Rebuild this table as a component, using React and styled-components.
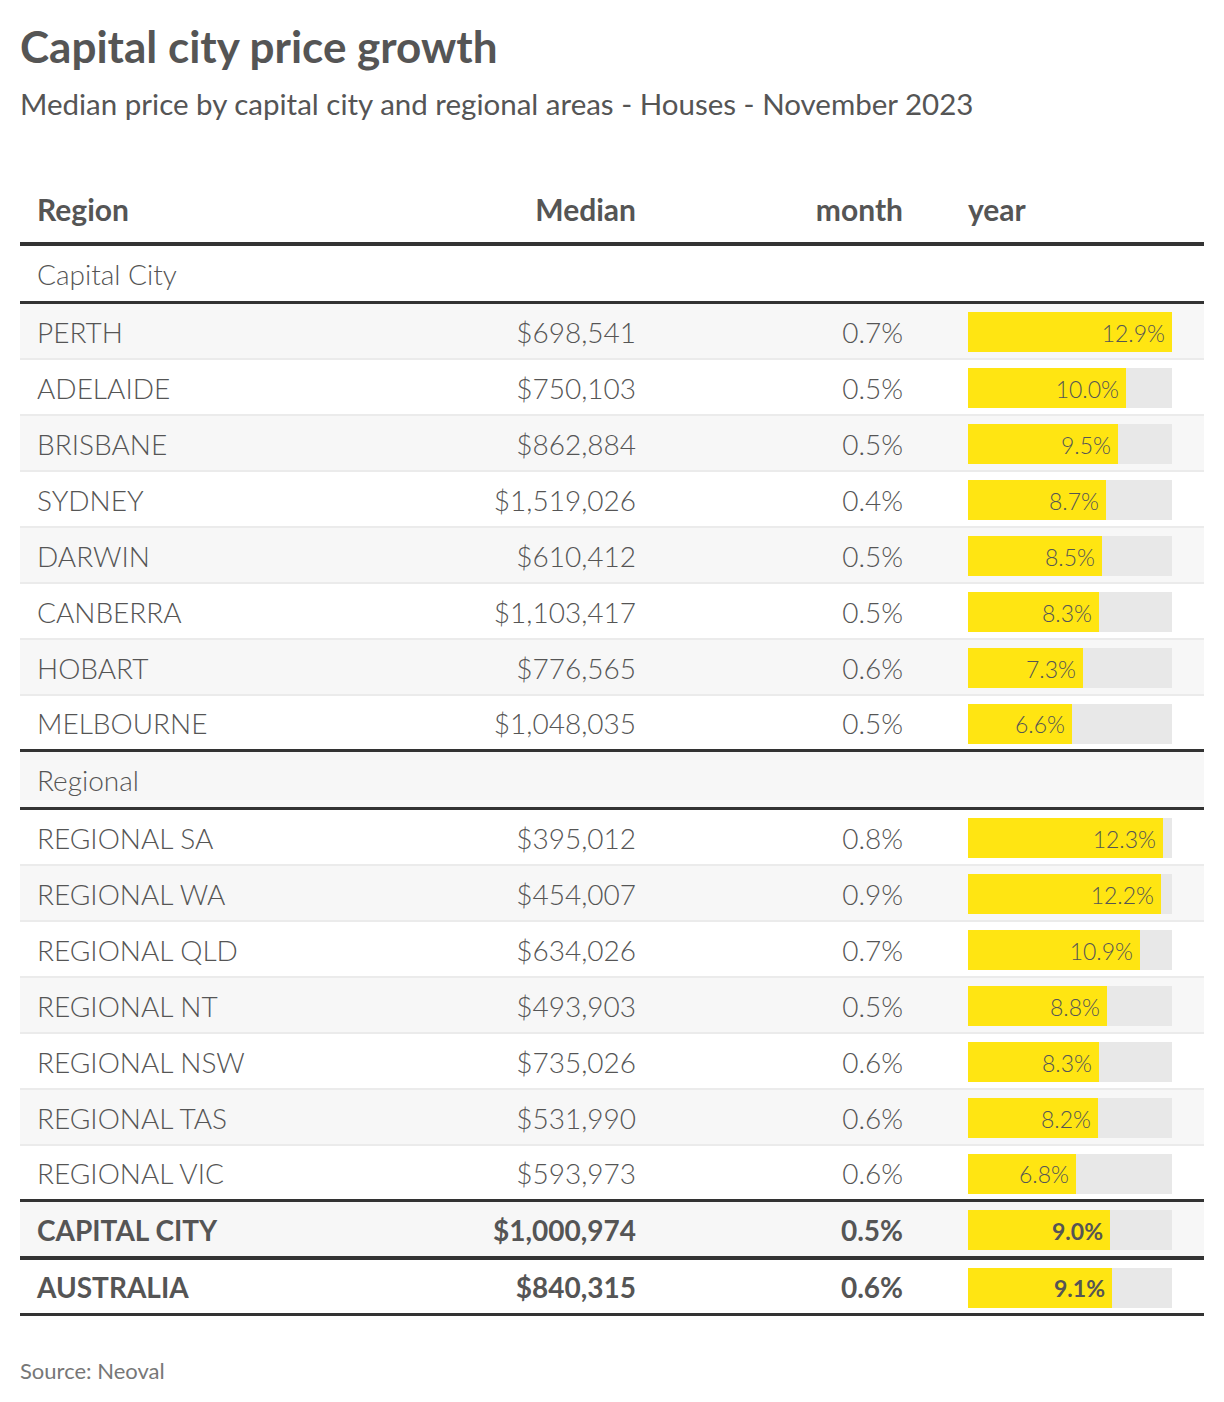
import React from 'react';
import styled, { createGlobalStyle } from 'styled-components';

const GlobalStyle = createGlobalStyle`
  body {
    margin: 0;
    background: #ffffff;
    font-family: Lato, "Open Sans", sans-serif;
    color: #555555;
  }
`;

const MAX_YEAR = 12.9;
const BAR_WIDTH = 204;

const capital = [
  ['PERTH', '$698,541', '0.7%', 12.9],
  ['ADELAIDE', '$750,103', '0.5%', 10.0],
  ['BRISBANE', '$862,884', '0.5%', 9.5],
  ['SYDNEY', '$1,519,026', '0.4%', 8.7],
  ['DARWIN', '$610,412', '0.5%', 8.5],
  ['CANBERRA', '$1,103,417', '0.5%', 8.3],
  ['HOBART', '$776,565', '0.6%', 7.3],
  ['MELBOURNE', '$1,048,035', '0.5%', 6.6],
];

const regional = [
  ['REGIONAL SA', '$395,012', '0.8%', 12.3],
  ['REGIONAL WA', '$454,007', '0.9%', 12.2],
  ['REGIONAL QLD', '$634,026', '0.7%', 10.9],
  ['REGIONAL NT', '$493,903', '0.5%', 8.8],
  ['REGIONAL NSW', '$735,026', '0.6%', 8.3],
  ['REGIONAL TAS', '$531,990', '0.6%', 8.2],
  ['REGIONAL VIC', '$593,973', '0.6%', 6.8],
];

const Page = styled.div`
  padding: 20px 20px 0 20px;
  width: 1184px;
`;

const Title = styled.h1`
  margin: 0;
  font-size: 44px;
  line-height: 52px;
  font-weight: 700;
  color: #555555;
`;

const Subtitle = styled.p`
  margin: 14px 0 0 0;
  font-size: 29.5px;
  line-height: 36px;
  font-weight: 400;
  color: #555555;
`;

const Table = styled.div`
  margin-top: 60px;
  display: flex;
  flex-direction: column;
`;

const Row = styled.div`
  display: grid;
  grid-template-columns: 436px 180px 267px 301px;
  align-items: center;
  box-sizing: border-box;
  height: ${p => p.$height || 56}px;
  padding-top: 2px;
  background: ${p => (p.$shade ? '#f7f7f7' : '#ffffff')};
  border-bottom: ${p => p.$line || '2px solid #ebebeb'};
  font-size: 28px;
  line-height: 33px;
  font-weight: ${p => (p.$bold ? 700 : 300)};
  color: #555555;
`;

const HeadRow = styled(Row)`
  padding-top: 0;
  padding-bottom: 6px;
  font-size: 30px;
  font-weight: 700;
  border-bottom: 4px solid #333333;
`;

const Cell = styled.div`
  text-align: ${p => p.$align || 'left'};
  padding-left: ${p => (p.$first ? '17px' : '0')};
  white-space: nowrap;
`;

const YearCell = styled.div`
  padding-left: 65px;
`;

const Track = styled.div`
  width: ${BAR_WIDTH}px;
  height: 40px;
  background: #e8e8e8;
  display: flex;
`;

const Fill = styled.div`
  height: 100%;
  background: #ffe512;
  box-sizing: border-box;
  padding-right: 7px;
  padding-top: 2px;
  display: flex;
  align-items: center;
  justify-content: flex-end;
  font-size: 23px;
  font-weight: ${p => (p.$bold ? 700 : 300)};
  color: #555555;
`;

const Source = styled.div`
  margin-top: 42px;
  font-size: 22px;
  line-height: 26px;
  color: #777777;
`;

function Bar({ value, bold }) {
  const w = Math.round((value / MAX_YEAR) * BAR_WIDTH);
  return (
    <Track>
      <Fill $bold={bold} style={{ width: w }}>
        {value.toFixed(1)}%
      </Fill>
    </Track>
  );
}

function DataRow({ row, shade, line, bold, height }) {
  const [name, median, month, year] = row;
  return (
    <Row $shade={shade} $line={line} $bold={bold} $height={height}>
      <Cell $first>{name}</Cell>
      <Cell $align="right">{median}</Cell>
      <Cell $align="right">{month}</Cell>
      <YearCell>
        <Bar value={year} bold={bold} />
      </YearCell>
    </Row>
  );
}

export default function App() {
  const dark = '3px solid #333333';
  return (
    <Page>
      <GlobalStyle />
      <Title>Capital city price growth</Title>
      <Subtitle>Median price by capital city and regional areas - Houses - November 2023</Subtitle>
      <Table>
        <HeadRow $height={64}>
          <Cell $first>Region</Cell>
          <Cell $align="right">Median</Cell>
          <Cell $align="right">month</Cell>
          <YearCell>year</YearCell>
        </HeadRow>
        <Row $line={dark} $height={58}>
          <Cell $first>Capital City</Cell>
        </Row>
        {capital.map((r, i) => (
          <DataRow
            key={r[0]}
            row={r}
            shade={i % 2 === 0}
            line={i === capital.length - 1 ? dark : undefined}
          />
        ))}
        <Row $shade $line={dark} $height={58}>
          <Cell $first>Regional</Cell>
        </Row>
        {regional.map((r, i) => (
          <DataRow
            key={r[0]}
            row={r}
            shade={i % 2 === 1}
            line={i === regional.length - 1 ? dark : undefined}
          />
        ))}
        <DataRow row={['CAPITAL CITY', '$1,000,974', '0.5%', 9.0]} shade bold line="4px solid #333333" height={58} />
        <DataRow row={['AUSTRALIA', '$840,315', '0.6%', 9.1]} bold line={dark} />
      </Table>
      <Source>Source: Neoval</Source>
    </Page>
  );
}
